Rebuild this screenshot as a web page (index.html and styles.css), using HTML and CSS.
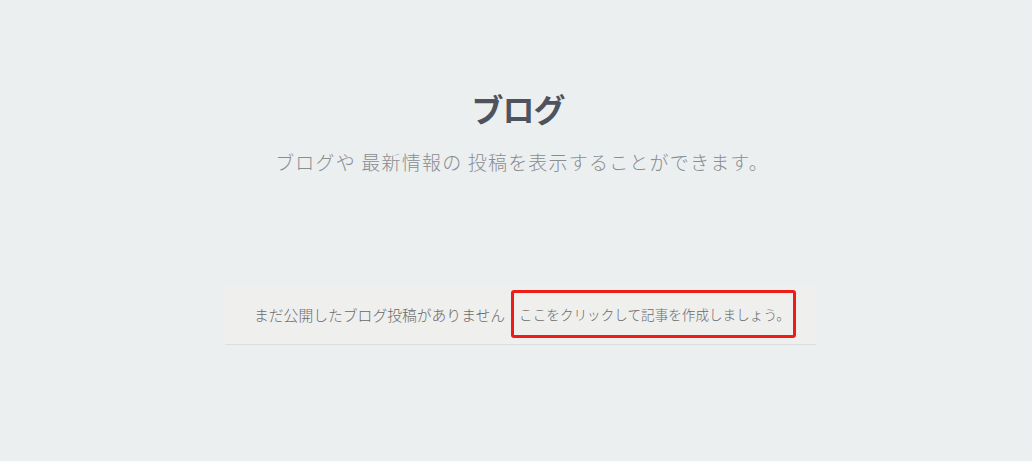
FILE: index.html
```html
<!DOCTYPE html>
<html lang="ja">
<head>
<meta charset="utf-8">
<link rel="stylesheet" href="styles.css">
</head>
<body>
<main class="page">
  <header class="intro">
    <h1 class="title">ブログ</h1>
    <p class="lead">ブログや 最新情報の 投稿を表示することができます。</p>
  </header>
  <section class="empty">
    <span class="empty-msg">まだ公開したブログ投稿がありません</span>
    <span class="empty-cta">ここをクリックして記事を作成しましょう。</span>
  </section>
</main>
</body>
</html>
```

FILE: styles.css
```css
html, body {
  margin: 0;
  padding: 0;
}
body {
  background: #eceff0;
  font-family: "Noto Sans CJK JP", "Noto Sans", sans-serif;
  width: 1032px;
  height: 461px;
  overflow: hidden;
}
.page {
  display: flex;
  flex-direction: column;
  align-items: center;
  padding-top: 86px;
}
.intro {
  display: flex;
  flex-direction: column;
  align-items: center;
  margin-left: 3px;
}
.title {
  margin: 0 0 0 1px;
  font-size: 32px;
  line-height: 44px;
  font-weight: 700;
  color: #4e535d;
  letter-spacing: -1px;
}
.lead {
  margin: 19px 0 0 9px;
  font-size: 19px;
  line-height: 26px;
  font-weight: 300;
  color: #8a8d90;
  letter-spacing: 1.2px;
}
.empty {
  margin-top: 110px;
  margin-left: 9px;
  width: 591px;
  height: 60px;
  box-sizing: border-box;
  background: #efefee;
  border-bottom: 1px solid #dcdddd;
  display: flex;
  align-items: center;
  padding-left: 29px;
  gap: 6px;
  font-weight: 300;
  color: #6a6a6a;
  white-space: nowrap;
}
.empty-msg {
  font-size: 14.8px;
  line-height: 20px;
}
.empty-cta {
  font-size: 13.6px;
  line-height: 20px;
  border: 3px solid #ee1c16;
  border-radius: 3px;
  padding: 11px 3px 11px 5px;
  margin-top: -1px;
}
```
